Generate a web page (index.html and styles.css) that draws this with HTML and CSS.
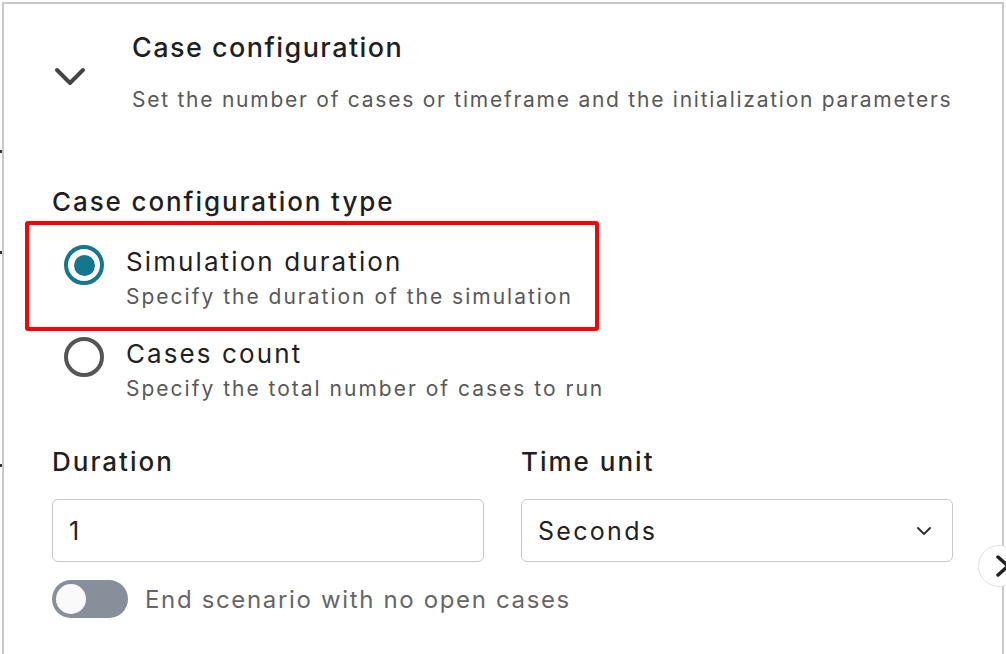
FILE: index.html
```html
<!DOCTYPE html>
<html lang="en">
<head>
<meta charset="utf-8">
<title>Case configuration</title>
<link rel="stylesheet" href="styles.css">
</head>
<body>
<span class="tick tick-1"></span>
<span class="tick tick-2"></span>
<span class="tick tick-3"></span>
<div class="panel">
  <div class="header">
    <div class="chev-col">
      <svg class="chev" width="34" height="22" viewBox="0 0 34 22"><path d="M4 4 L17 17 L30 4" fill="none" stroke="#444" stroke-width="4" stroke-linecap="round" stroke-linejoin="round"/></svg>
    </div>
    <div class="header-text">
      <div class="title">Case configuration</div>
      <div class="subtitle">Set the number of cases or timeframe and the initialization parameters</div>
    </div>
  </div>
  <div class="body">
    <div class="group-label">Case configuration type</div>
    <div class="options">
      <div class="option option-highlight">
        <span class="radio radio-on"><span class="dot"></span></span>
        <div class="option-text">
          <div class="option-title">Simulation duration</div>
          <div class="option-desc">Specify the duration of the simulation</div>
        </div>
      </div>
      <div class="option">
        <span class="radio"></span>
        <div class="option-text">
          <div class="option-title">Cases count</div>
          <div class="option-desc">Specify the total number of cases to run</div>
        </div>
      </div>
    </div>
    <div class="fields">
      <div class="field">
        <div class="field-label">Duration</div>
        <div class="input">1</div>
      </div>
      <div class="field">
        <div class="field-label">Time unit</div>
        <div class="input select">
          <span>Seconds</span>
          <svg width="16" height="10" viewBox="0 0 16 10"><path d="M2 2 L8 8 L14 2" fill="none" stroke="#333" stroke-width="2" stroke-linecap="round" stroke-linejoin="round"/></svg>
        </div>
      </div>
    </div>
    <div class="toggle-row">
      <span class="toggle"><span class="knob"></span></span>
      <span class="toggle-label">End scenario with no open cases</span>
    </div>
  </div>
</div>
<div class="side-btn">
  <svg width="20" height="24" viewBox="0 0 20 24"><path d="M5 3 L15 12 L5 21" fill="none" stroke="#222" stroke-width="3.5" stroke-linecap="round" stroke-linejoin="round"/></svg>
</div>
</body>
</html>
```
FILE: styles.css
```css
html, body {
  margin: 0;
  padding: 0;
  background: #fff;
  overflow: hidden;
  height: 654px;
}
body {
  font-family: Inter, "Open Sans", "Liberation Sans", sans-serif;
  color: #222;
  position: relative;
}
.panel {
  margin: 2px 0 0 2px;
  width: 998px;
  height: 650px;
  border-top: 2px solid #c8c8c8;
  border-left: 2px solid #c8c8c8;
  border-right: 2px solid #c8c8c8;
}
.tick {
  position: absolute;
  left: 0;
  width: 2px;
  height: 3px;
  background: #333;
}
.tick-1 { top: 150px; }
.tick-2 { top: 251px; }
.tick-3 { top: 464px; }

.header {
  display: flex;
  align-items: center;
  padding: 28px 0 0 48px;
}
.chev-col {
  width: 80px;
  padding-top: 8px;
}
.chev { display: block; margin-left: 1px; }
.title {
  font-size: 27px;
  font-weight: 500;
  line-height: 32px;
  letter-spacing: 1.45px;
  color: #1f1f1f;
}
.subtitle {
  margin-top: 22px;
  font-size: 21px;
  line-height: 28px;
  letter-spacing: 1.75px;
  color: #585858;
}
.body {
  padding: 72px 49px 0 48px;
}
.group-label {
  font-size: 26px;
  font-weight: 500;
  line-height: 32px;
  letter-spacing: 1.9px;
  color: #1f1f1f;
}
.options {
  margin-top: 28px;
  display: flex;
  flex-direction: column;
  gap: 28px;
}
.option {
  position: relative;
  display: flex;
  align-items: flex-start;
  padding-left: 12px;
}
.option-highlight::after {
  content: "";
  position: absolute;
  left: -27px;
  top: -25px;
  width: 566px;
  height: 102px;
  border: 4px solid #ff0000;
  border-radius: 3px;
}
.radio {
  box-sizing: border-box;
  width: 40px;
  height: 40px;
  border-radius: 50%;
  border: 4px solid #555;
  display: flex;
  align-items: center;
  justify-content: center;
  flex: none;
  margin-top: -1px;
}
.radio-on { border-color: #14778e; }
.dot {
  width: 21px;
  height: 21px;
  border-radius: 50%;
  background: #14778e;
}
.option-text { margin-left: 22px; }
.option-title {
  font-size: 26px;
  line-height: 32px;
  letter-spacing: 2.1px;
  color: #1f1f1f;
}
.option-desc {
  margin-top: 6px;
  font-size: 21px;
  line-height: 26px;
  letter-spacing: 2px;
  color: #585858;
}
.fields {
  margin-top: 44px;
  display: flex;
  gap: 37px;
}
.field { flex: 1; }
.field-label {
  font-size: 26px;
  font-weight: 500;
  line-height: 32px;
  letter-spacing: 2px;
  color: #1f1f1f;
}
.input {
  box-sizing: border-box;
  margin-top: 21px;
  height: 63px;
  border: 1px solid #c8c8c8;
  border-radius: 6px;
  padding: 0 16px;
  display: flex;
  align-items: center;
  font-size: 25px;
  letter-spacing: 2.3px;
  color: #222;
}
.select {
  justify-content: space-between;
  padding-right: 20px;
}
.toggle-row {
  margin-top: 18px;
  display: flex;
  align-items: center;
  gap: 17px;
}
.toggle {
  box-sizing: border-box;
  width: 76px;
  height: 38px;
  border-radius: 19px;
  background: #868f9a;
  padding: 4px;
  display: flex;
}
.knob {
  width: 30px;
  height: 30px;
  border-radius: 50%;
  background: #fafafa;
}
.toggle-label {
  font-size: 24px;
  letter-spacing: 1.65px;
  color: #666;
}
.side-btn {
  position: absolute;
  left: 978px;
  top: 545px;
  box-sizing: border-box;
  width: 42px;
  height: 42px;
  border-radius: 50%;
  border: 1px solid #e0e0e0;
  background: #fff;
  display: flex;
  align-items: center;
  padding-left: 14px;
}
```
